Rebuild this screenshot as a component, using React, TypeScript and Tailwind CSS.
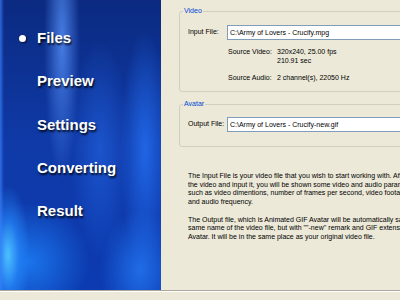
import React from "react";

const menu = ["Files", "Preview", "Settings", "Converting", "Result"];

const help1 = [
  "The Input File is your video file that you wish to start working with. After you select",
  "the video and input it, you will be shown some video and audio parameters,",
  "such as video dimentions, number of frames per second, video footage",
  "and audio frequency.",
];

const help2 = [
  "The Output file, which is Animated GIF Avatar will be automatically saved with the",
  "same name of the video file, but with \"\"-new'' remark and GIF extension for",
  "Avatar. It will be in the same place as your original video file.",
];

function Sidebar() {
  return (
    <nav className="flex w-[161px] shrink-0 flex-col gap-[23.3px] bg-[linear-gradient(90deg,rgba(60,130,255,0.7)_0px,transparent_4px),radial-gradient(ellipse_22px_70px_at_8px_255px,#4cc0ff_0%,rgba(40,140,255,0.6)_50%,transparent_100%),radial-gradient(ellipse_60px_60px_at_30px_262px,rgba(30,130,250,0.8),transparent),radial-gradient(ellipse_18px_140px_at_62px_40px,rgba(90,150,255,0.75),transparent),radial-gradient(ellipse_30px_110px_at_100px_150px,rgba(40,110,240,0.5),transparent),radial-gradient(ellipse_25px_120px_at_145px_150px,rgba(40,120,255,0.7),transparent),radial-gradient(ellipse_40px_60px_at_140px_270px,rgba(40,130,255,0.7),transparent),linear-gradient(180deg,#0b2a80_0%,#0f3aa8_50%,#0c3ab0_100%)] pt-[28px] font-['Liberation_Sans',Arial,sans-serif]">
      {menu.map((item, i) => (
        <div key={item} className="flex h-[20px] items-center">
          <div className="w-[37px] shrink-0">
            {i === 0 && (
              <div className="ml-[19px] h-[7px] w-[7px] rounded-full bg-white shadow-[1px_1px_2px_rgba(0,0,0,0.7)]" />
            )}
          </div>
          <span className="text-[15px] font-bold leading-[20px] text-white [text-shadow:1px_2px_2px_rgba(0,0,0,0.85)]">
            {item}
          </span>
        </div>
      ))}
    </nav>
  );
}

function TextBox({ value }: { value: string }) {
  return (
    <div className="h-[15px] flex-1 whitespace-nowrap border border-[#7f9db9] bg-white pl-[2px] leading-[13px]">
      {value}
    </div>
  );
}

export default function App() {
  return (
    <div className="flex h-[300px] w-[400px] flex-col overflow-hidden bg-[#ece9d8]">
      <div className="flex h-[290px] shrink-0">
        <Sidebar />
        <main className="min-w-0 flex-1 overflow-hidden pl-[18px] pt-[6px] font-['Liberation_Sans',Arial,sans-serif] text-[7px] text-black">
          <fieldset className="w-[300px] rounded-[3px] border border-[#d0d0bf] pb-[9px]">
            <legend className="ml-[3px] px-[1px] leading-[10px] text-[#0046d5]">Video</legend>
            <div className="mt-[9px] flex items-center">
              <span className="ml-[8px] w-[39px] shrink-0">Input File:</span>
              <TextBox value="C:\Army of Lovers - Crucify.mpg" />
            </div>
            <div className="ml-[48px] mt-[7px] flex leading-[9px]">
              <span className="w-[49px] shrink-0">Source Video:</span>
              <div>
                <div>320x240, 25.00 fps</div>
                <div>210.91 sec</div>
              </div>
            </div>
            <div className="ml-[48px] mt-[8px] flex leading-[9px]">
              <span className="w-[49px] shrink-0">Source Audio:</span>
              <div>2 channel(s), 22050 Hz</div>
            </div>
          </fieldset>

          <fieldset className="mt-[7px] w-[300px] rounded-[3px] border border-[#d0d0bf] pb-[14px]">
            <legend className="ml-[3px] px-[1px] leading-[10px] text-[#0046d5]">Avatar</legend>
            <div className="mt-[8px] flex items-center">
              <span className="ml-[8px] w-[39px] shrink-0">Output File:</span>
              <TextBox value="C:\Army of Lovers - Crucify-new.gif" />
            </div>
          </fieldset>

          <div className="ml-[9px] mt-[25px] whitespace-nowrap leading-[8.7px]">
            {help1.map((line) => (
              <div key={line}>{line}</div>
            ))}
            <div className="mt-[8.7px]">
              {help2.map((line) => (
                <div key={line}>{line}</div>
              ))}
            </div>
          </div>
        </main>
      </div>
      <div className="h-px bg-[#aca899]" />
      <div className="h-px bg-white" />
    </div>
  );
}
